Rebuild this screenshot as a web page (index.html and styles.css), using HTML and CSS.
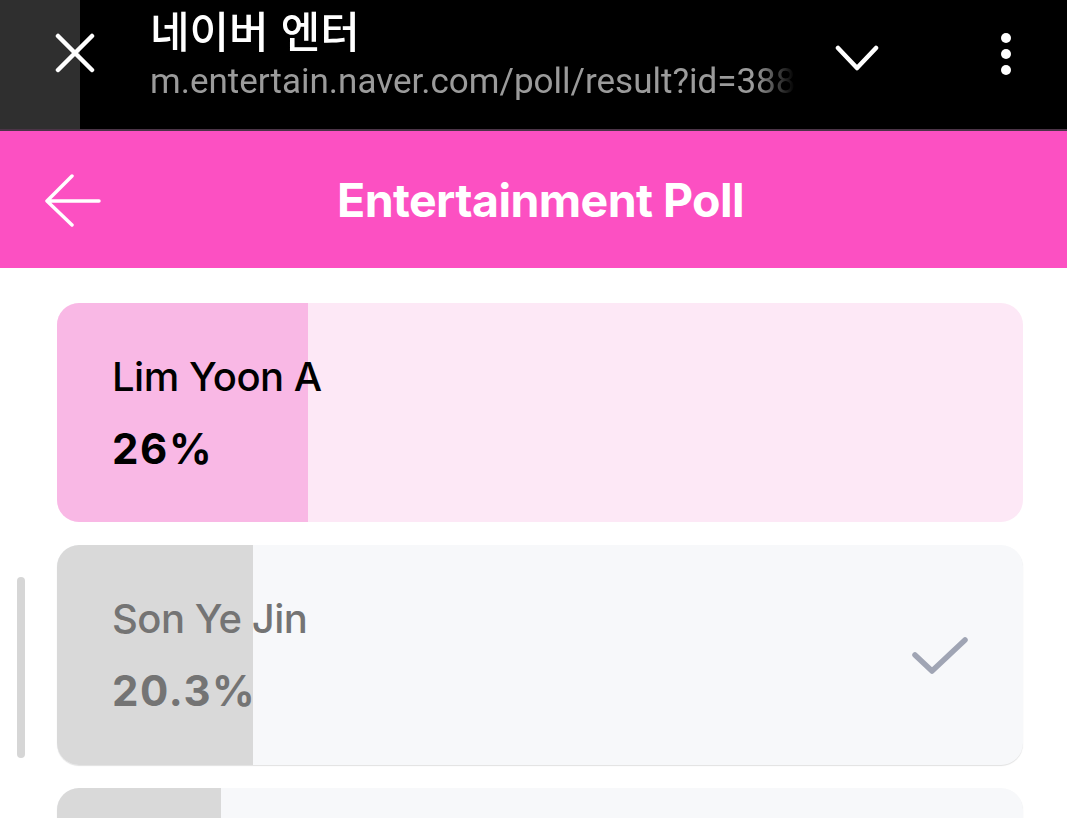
FILE: index.html
```html
<!DOCTYPE html>
<html lang="ko">
<head>
  <meta charset="UTF-8" />
  <title>Entertainment Poll</title>
  <meta name="viewport" content="width=device-width, initial-scale=1" />
  <link rel="stylesheet" href="styles.css">
</head>
<body>
  <div class="browser-bar">
    <button class="close-tab" aria-label="close">
      <svg width="40" height="40" viewBox="0 0 40 40"><path d="M3 3 L37 37 M37 3 L3 37" stroke="#fff" stroke-width="4.5" stroke-linecap="round" fill="none"/></svg>
    </button>
    <div class="page-info">
      <div class="page-title">네이버 엔터</div>
      <div class="page-url">m.entertain.naver.com/poll/result?id=3888</div>
    </div>
    <button class="bar-btn chevron" aria-label="expand">
      <svg width="44" height="28" viewBox="0 0 44 28"><path d="M3 4 L22 24 L41 4" stroke="#fff" stroke-width="4.5" stroke-linecap="round" stroke-linejoin="round" fill="none"/></svg>
    </button>
    <button class="bar-btn menu" aria-label="menu">
      <span class="dot"></span><span class="dot"></span><span class="dot"></span>
    </button>
  </div>

  <header class="app-header">
    <button class="back" aria-label="back">
      <svg width="58" height="54" viewBox="0 0 58 54"><path d="M55 28 L4 28 M28 3 L3 28 L28 52" stroke="#fff" stroke-width="3.5" stroke-linecap="round" stroke-linejoin="round" fill="none"/></svg>
    </button>
    <h1>Entertainment Poll</h1>
  </header>

  <main class="poll">
    <div class="option selected">
      <div class="bar" style="width: 26%"></div>
      <div class="option-text">
        <div class="name">Lim Yoon A</div>
        <div class="percent">26%</div>
      </div>
    </div>

    <div class="option">
      <div class="bar" style="width: 20.3%"></div>
      <div class="option-text">
        <div class="name">Son Ye Jin</div>
        <div class="percent">20.3%</div>
      </div>
      <svg class="check" width="60" height="44" viewBox="0 0 60 44"><path d="M5 22 L22 38 L55 7" stroke="#a0a5b4" stroke-width="5.5" stroke-linecap="round" stroke-linejoin="round" fill="none"/></svg>
    </div>

    <div class="option">
      <div class="bar" style="width: 17%"></div>
      <div class="option-text"></div>
    </div>
  </main>

  <div class="scroll-thumb"></div>
</body>
</html>
```

FILE: styles.css
```css
body {
  margin: 0;
  padding: 0;
  width: 1067px;
  height: 818px;
  overflow: hidden;
  background: #fff;
  font-family: Inter, "Noto Sans", sans-serif;
  position: relative;
}

button {
  background: none;
  border: none;
  padding: 0;
  cursor: pointer;
}

/* browser top bar */
.browser-bar {
  height: 129px;
  background: #000;
  border-bottom: 2px solid #4b3447;
  display: flex;
  align-items: center;
}

.close-tab {
  width: 150px;
  height: 129px;
  padding-left: 55px;
  padding-bottom: 24px;
  display: flex;
  align-items: center;
  background: linear-gradient(to right, #2f2f2f 80px, #000 80px);
}

.page-info {
  width: 650px;
  height: 129px;
  -webkit-mask-image: linear-gradient(to right, #000 605px, transparent 645px);
  mask-image: linear-gradient(to right, #000 605px, transparent 645px);
}

.page-title {
  font-family: "Noto Sans CJK KR", sans-serif;
  font-weight: 500;
  font-size: 43px;
  line-height: 62px;
  color: #fff;
  margin-top: -2px;
}

.page-url {
  font-family: Roboto, "Liberation Sans", sans-serif;
  font-size: 35px;
  line-height: 42px;
  color: #9b9b9b;
  white-space: nowrap;
  margin-top: 1px;
}

.chevron {
  margin-left: 35px;
  margin-bottom: 14px;
  width: 44px;
  height: 28px;
}

.menu {
  margin-left: 122px;
  margin-bottom: 22px;
  display: flex;
  flex-direction: column;
  gap: 6px;
}

.dot {
  width: 10px;
  height: 10px;
  border-radius: 50%;
  background: #fff;
}

/* app header */
.app-header {
  height: 137px;
  background: #fc50c2;
  display: flex;
  align-items: center;
  position: relative;
}

.back {
  margin-left: 44px;
  width: 58px;
  height: 54px;
  position: relative;
  z-index: 1;
}

.app-header h1 {
  position: absolute;
  left: 14px;
  right: 0;
  margin: 0;
  text-align: center;
  color: #fff;
  font-size: 46.5px;
  font-weight: 700;
  letter-spacing: -0.6px;
}

/* poll */
.poll {
  padding: 35px 44px 0 57px;
  display: flex;
  flex-direction: column;
  gap: 23px;
}

.option {
  height: 220px;
  border-radius: 22px;
  background: #f7f8fa;
  position: relative;
  overflow: hidden;
  display: flex;
  align-items: center;
  box-shadow: 0 1px 1px rgba(0, 0, 0, 0.12);
  color: #747474;
}

.option.selected {
  height: 219px;
  background: #fde8f6;
  color: #000;
  box-shadow: none;
}

.bar {
  position: absolute;
  left: 0;
  top: 0;
  bottom: 0;
  background: #d9d9d9;
}

.selected .bar {
  background: #f9b8e5;
}

.option-text {
  position: relative;
  padding-left: 55px;
  display: flex;
  flex-direction: column;
  gap: 24px;
  flex: 1;
}

.name {
  font-size: 40px;
  font-weight: 500;
  line-height: 48px;
  letter-spacing: -0.5px;
}

.percent {
  font-size: 42px;
  font-weight: 700;
  line-height: 48px;
  letter-spacing: 1.6px;
}

.check {
  position: relative;
  margin-right: 53px;
}

.scroll-thumb {
  position: absolute;
  left: 17px;
  top: 577px;
  width: 8px;
  height: 181px;
  border-radius: 4px;
  background: #d6d6d6;
}
```
